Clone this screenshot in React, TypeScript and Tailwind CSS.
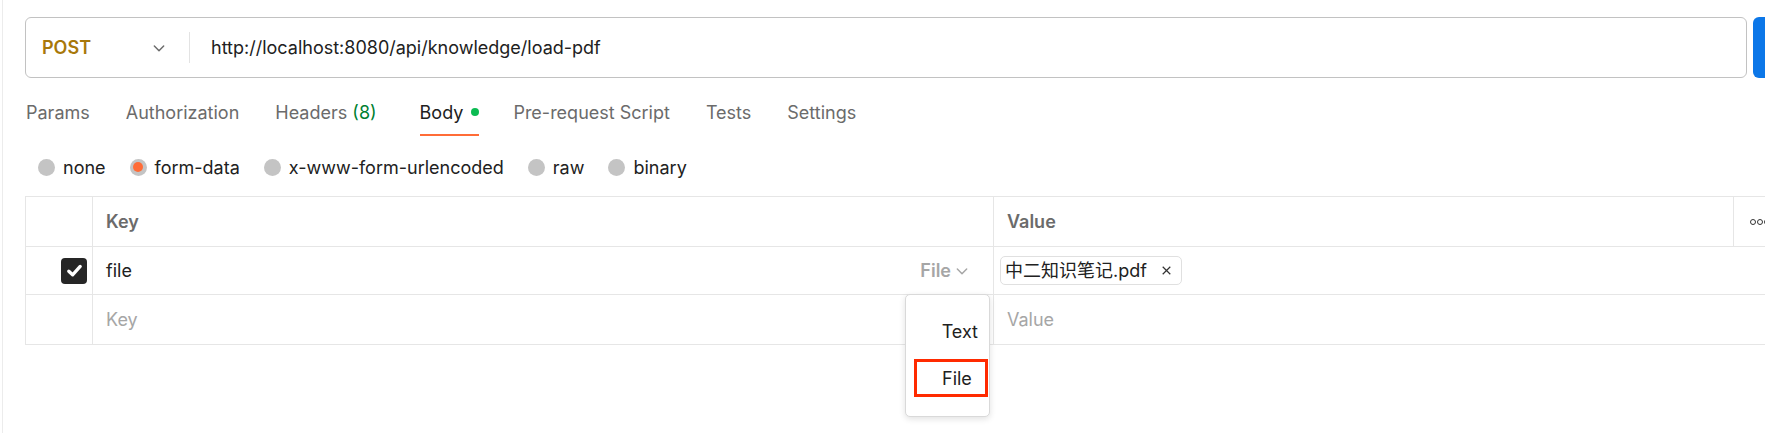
import { FC } from 'react';

const tabs = [
  { label: 'Params' },
  { label: 'Authorization' },
  { label: 'Headers', count: '(8)' },
  { label: 'Body', active: true, extra: 'ml-[7px] -mr-[2px]' },
  { label: 'Pre-request Script' },
  { label: 'Tests' },
  { label: 'Settings' },
];

const bodyTypes = [
  { label: 'none' },
  { label: 'form-data', checked: true },
  { label: 'x-www-form-urlencoded' },
  { label: 'raw' },
  { label: 'binary' },
];

const Chevron: FC<{ className?: string }> = ({ className }) => (
  <svg viewBox="0 0 12 12" className={className} fill="none" stroke="currentColor" strokeWidth="1.1">
    <path d="M2.5 4.5 6 8l3.5-3.5" strokeLinecap="round" strokeLinejoin="round" />
  </svg>
);

export default function App() {
  return (
    <div className="w-[1765px] h-[433px] overflow-hidden bg-white font-['Inter','Noto_Sans_CJK_SC',sans-serif]">
      <div className="ml-[2px] h-full border-l border-[#ececec] pl-[22px] pt-[17px]">
        {/* url bar */}
        <div className="flex gap-[6px] h-[61px]">
          <div className="w-[1722px] shrink-0 flex items-center border border-[#c2c2c2] rounded-[6px]">
            <div className="w-[164px] shrink-0 flex items-center justify-between pl-[16px] pr-[22px] border-r border-[#e3e3e3] h-[31px]">
              <span className="text-[18px] font-semibold text-[#a8780a]">POST</span>
              <Chevron className="w-[16px] h-[16px] text-[#6b6b6b]" />
            </div>
            <span className="pl-[21px] text-[18px] text-[#212121]">http://localhost:8080/api/knowledge/load-pdf</span>
          </div>
          <div className="w-[80px] shrink-0 bg-[#0c77e8] rounded-l-[6px]" />
        </div>

        {/* tabs */}
        <div className="flex gap-[36px] mt-[12px] h-[46px] pl-[1px]">
          {tabs.map((t) => (
            <div
              key={t.label}
              className={`flex items-center gap-[8px] text-[18px] border-b-2 ${t.extra ?? ''} ${
                t.active ? 'border-[#ff6c37] text-[#212121]' : 'border-transparent text-[#6b6b6b]'
              }`}
            >
              <span>
                {t.label}
                {t.count && <span className="text-[#007f31]"> {t.count}</span>}
              </span>
              {t.active && <span className="w-[8px] h-[8px] rounded-full bg-[#0cbb52]" />}
            </div>
          ))}
        </div>

        {/* body types */}
        <div className="flex items-center gap-[24px] mt-[20px] pl-[13px] h-[22px]">
          {bodyTypes.map((b) => (
            <label key={b.label} className="flex items-center gap-[8px] text-[18px] text-[#212121]">
              <span className="w-[17px] h-[17px] rounded-full bg-[#c4c4c4] flex items-center justify-center">
                {b.checked && <span className="w-[10px] h-[10px] rounded-full bg-[#ff6c37]" />}
              </span>
              {b.label}
            </label>
          ))}
        </div>

        {/* table */}
        <div className="relative mt-[18px]">
          <div className="border-t border-l border-[#e6e6e6] text-[18px]">
            <div className="flex h-[50px] border-b border-[#e6e6e6]">
              <div className="w-[67px] shrink-0 border-r border-[#e6e6e6]" />
              <div className="w-[901px] shrink-0 border-r border-[#e6e6e6] flex items-center pl-[13px] font-semibold text-[#6b6b6b]">Key</div>
              <div className="w-[740px] shrink-0 border-r border-[#e6e6e6] flex items-center pl-[13px] font-semibold text-[#6b6b6b]">Value</div>
              <div className="flex-1 flex items-center pl-[16px] gap-[1px]">
                <span className="w-[6px] h-[6px] rounded-full border-[1.5px] border-[#333]" />
                <span className="w-[6px] h-[6px] rounded-full border-[1.5px] border-[#333]" />
                <span className="w-[6px] h-[6px] rounded-full border-[1.5px] border-[#333]" />
              </div>
            </div>
            <div className="flex h-[48px] border-b border-[#e6e6e6]">
              <div className="w-[67px] shrink-0 border-r border-[#e6e6e6] flex items-center justify-end pr-[5px]">
                <span className="w-[26px] h-[26px] rounded-[4px] bg-[#262626] flex items-center justify-center">
                  <svg viewBox="0 0 16 16" className="w-[19px] h-[19px]" fill="none" stroke="#fff" strokeWidth="2.8" strokeLinecap="round" strokeLinejoin="round">
                    <path d="M3.2 8.6 6.4 11.6 12.8 4.6" />
                  </svg>
                </span>
              </div>
              <div className="w-[901px] shrink-0 border-r border-[#e6e6e6] flex items-center justify-between pl-[13px] pr-[23px]">
                <span className="text-[#212121]">file</span>
                <span className="flex items-center gap-[3px] font-semibold text-[#a6a6a6]">
                  File
                  <Chevron className="w-[16px] h-[16px] text-[#a6a6a6]" />
                </span>
              </div>
              <div className="w-[740px] shrink-0 flex items-center pl-[6px]">
                <span className="flex items-center gap-[13px] h-[29px] border border-[#e0e0e0] rounded-[5px] pl-[4px] pr-[8px] text-[#212121]">
                  中二知识笔记.pdf
                  <svg viewBox="0 0 12 12" className="w-[13px] h-[13px]" fill="none" stroke="#333" strokeWidth="1.1">
                    <path d="M2.5 2.5l7 7M9.5 2.5l-7 7" />
                  </svg>
                </span>
              </div>
              <div className="flex-1" />
            </div>
            <div className="flex h-[50px] border-b border-[#e6e6e6]">
              <div className="w-[67px] shrink-0 border-r border-[#e6e6e6]" />
              <div className="w-[901px] shrink-0 border-r border-[#e6e6e6] flex items-center pl-[13px] text-[#a6a6a6]">Key</div>
              <div className="w-[740px] shrink-0 flex items-center pl-[13px] text-[#a6a6a6]">Value</div>
              <div className="flex-1" />
            </div>
          </div>

          {/* type menu */}
          <div className="absolute left-[880px] top-[98px] w-[85px] h-[123px] bg-white border border-[#d9d9d9] rounded-[5px] shadow-[0_2px_6px_rgba(0,0,0,0.12)] text-[18px] text-[#212121]">
            <div className="h-[36px] mt-[18px] flex items-center justify-end pr-[11px]">Text</div>
            <div className="ml-[8px] mr-[1px] mt-[10px] h-[38px] border-[3px] border-[#ff2a00] flex items-center pl-[25px]">File</div>
          </div>
        </div>
      </div>
    </div>
  );
}
